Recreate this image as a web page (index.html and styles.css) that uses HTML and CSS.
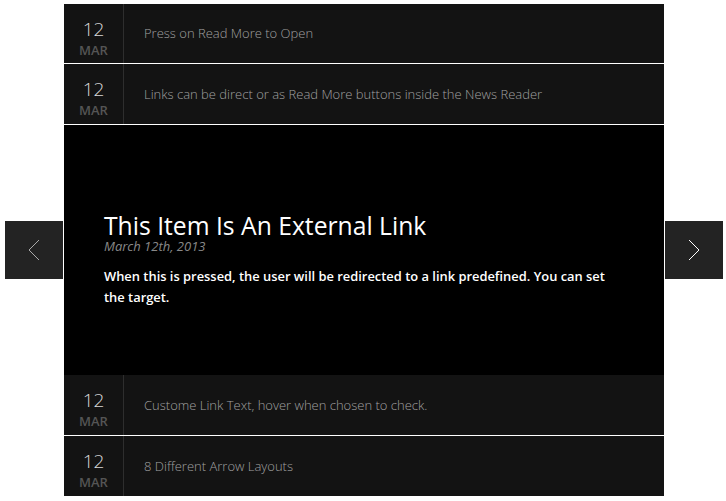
FILE: index.html
```html
<!DOCTYPE html>
<html lang="en">
  <head>
    <meta charset="UTF-8" />
    <meta name="viewport" content="width=device-width, initial-scale=1.0" />
    <title>News Reader</title>
    <link rel="stylesheet" href="styles.css">
  </head>
  <body>
    <div class="reader">
      <a class="arrow arrow-left" href="#">
        <svg width="12" height="22" viewBox="0 0 12 22"><polyline points="11,1 1,11 11,21" /></svg>
      </a>

      <div class="news">
        <div class="item first">
          <div class="date"><span class="day">12</span><span class="month">MAR</span></div>
          <div class="title">Press on Read More to Open</div>
        </div>
        <div class="item">
          <div class="date"><span class="day">12</span><span class="month">MAR</span></div>
          <div class="title">Links can be direct or as Read More buttons inside the News Reader</div>
        </div>

        <div class="open">
          <h2>This Item Is An External Link</h2>
          <p class="when">March 12th, 2013</p>
          <p class="text">When this is pressed, the user will be redirected to a link predefined. You can set the target.</p>
        </div>

        <div class="item after-open">
          <div class="date"><span class="day">12</span><span class="month">MAR</span></div>
          <div class="title">Custome Link Text, hover when chosen to check.</div>
        </div>
        <div class="item">
          <div class="date"><span class="day">12</span><span class="month">MAR</span></div>
          <div class="title">8 Different Arrow Layouts</div>
        </div>
      </div>

      <a class="arrow arrow-right" href="#">
        <svg width="12" height="22" viewBox="0 0 12 22"><polyline points="1,1 11,11 1,21" /></svg>
      </a>
    </div>
  </body>
</html>
```

FILE: styles.css
```css
/* styles.css */
body {
  margin: 0;
  background: #fff;
  font-family: "Open Sans", "Noto Sans", sans-serif;
}

.reader {
  display: flex;
  align-items: center;
  gap: 1px;
  padding: 4px 0 0 5px;
}

.arrow {
  width: 58px;
  height: 58px;
  background: #232323;
  display: flex;
  align-items: center;
  justify-content: center;
}

.arrow svg {
  fill: none;
  stroke-width: 1;
}

.arrow-left svg {
  stroke: #aaa;
}

.arrow-right svg {
  stroke: #fff;
}

.news {
  width: 600px;
  display: flex;
  flex-direction: column;
}

.item {
  height: 60px;
  background: #131313;
  display: flex;
  margin-top: 1px;
}

.item.first {
  height: 59px;
  margin-top: 0;
}

.item.after-open {
  margin-top: 0;
}

.date {
  width: 60px;
  box-sizing: border-box;
  padding-top: 14px;
  border-right: 1px solid #2e2e2e;
  display: flex;
  flex-direction: column;
  align-items: center;
}

.day {
  color: #d8d8d8;
  font-size: 19px;
  font-weight: 300;
  line-height: 22px;
}

.month {
  margin-top: 3px;
  color: #555;
  font-size: 13px;
  font-weight: 600;
  line-height: 15px;
}

.title {
  flex: 1;
  display: flex;
  align-items: center;
  padding: 0 0 1px 20px;
  color: #a0a0a0;
  font-size: 13px;
  font-weight: 300;
}

.open {
  height: 250px;
  margin-top: 1px;
  background: #000;
  box-sizing: border-box;
  padding: 88px 50px 0 40px;
  color: #fff;
}

.open h2 {
  margin: 0;
  font-size: 24.7px;
  font-weight: 400;
  line-height: 26px;
}

.when {
  margin: 0;
  color: #888;
  font-size: 13px;
  font-style: italic;
  line-height: 14px;
}

.text {
  margin: 13px 0 0;
  font-size: 12.9px;
  font-weight: 600;
  line-height: 21px;
}
```
